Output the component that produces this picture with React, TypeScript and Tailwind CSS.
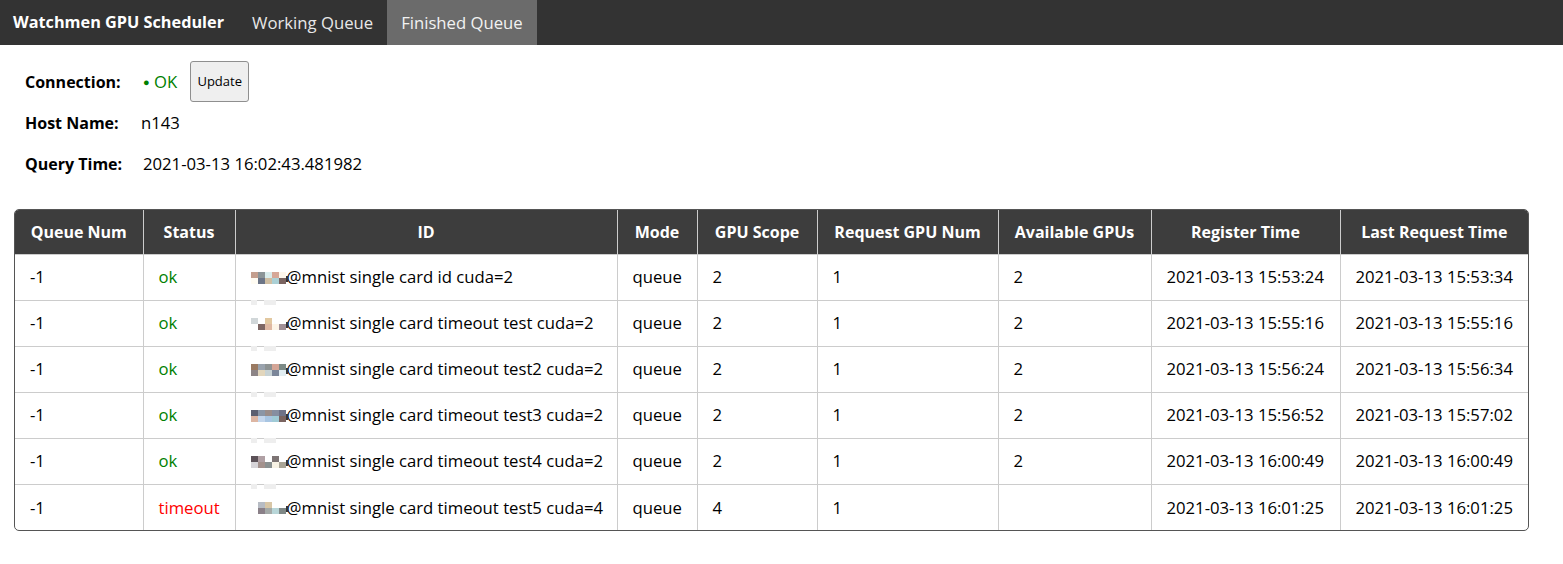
import React from "react";

type Row = {
  id: string;
  status: "ok" | "timeout";
  scope: string;
  req: string;
  avail: string;
  reg: string;
  last: string;
  mosaic: string[][];
};

const W = "#ffffff";

const rows: Row[] = [
  {
    id: "@mnist single card id cuda=2",
    status: "ok",
    scope: "2",
    req: "1",
    avail: "2",
    reg: "2021-03-13 15:53:24",
    last: "2021-03-13 15:53:34",
    mosaic: [
      ["#c49f8f", "#8b9497", "#d9ecec", "#d6a797", "#fdf6ec"],
      ["#fffcf3", "#6c7587", "#cfbea3", "#abd0d5", "#7a6460"],
    ],
  },
  {
    id: "@mnist single card timeout test cuda=2",
    status: "ok",
    scope: "2",
    req: "1",
    avail: "2",
    reg: "2021-03-13 15:55:16",
    last: "2021-03-13 15:55:16",
    mosaic: [
      ["#d1d7d9", W, "#e2c8a0", W, W],
      [W, "#7d6663", "#dfb8a2", "#fdf5e8", "#a19096"],
    ],
  },
  {
    id: "@mnist single card timeout test2 cuda=2",
    status: "ok",
    scope: "2",
    req: "1",
    avail: "2",
    reg: "2021-03-13 15:56:24",
    last: "2021-03-13 15:56:34",
    mosaic: [
      ["#9a7a62", "#9aa3ae", "#8e9393", "#d4a596", "#7c8a86"],
      ["#8c8486", "#e2d6bc", "#c7d2d4", "#7b8699", "#e1edf2"],
    ],
  },
  {
    id: "@mnist single card timeout test3 cuda=2",
    status: "ok",
    scope: "2",
    req: "1",
    avail: "2",
    reg: "2021-03-13 15:56:52",
    last: "2021-03-13 15:57:02",
    mosaic: [
      ["#5c5f70", "#8b96a6", "#9a8d8a", "#868ea0", "#6f7287"],
      ["#ddb6a3", "#c4d6ec", "#a8c5e2", "#a0cbd6", "#7a6460"],
    ],
  },
  {
    id: "@mnist single card timeout test4 cuda=2",
    status: "ok",
    scope: "2",
    req: "1",
    avail: "2",
    reg: "2021-03-13 16:00:49",
    last: "2021-03-13 16:00:49",
    mosaic: [
      ["#5c5258", "#b0a0a4", W, "#7d7474", W],
      ["#d6d4d8", "#a3918c", "#8a9090", "#f7f2e4", "#a8a496"],
    ],
  },
  {
    id: "@mnist single card timeout test5 cuda=4",
    status: "timeout",
    scope: "4",
    req: "1",
    avail: "",
    reg: "2021-03-13 16:01:25",
    last: "2021-03-13 16:01:25",
    mosaic: [
      [W, "#b7bcc4", "#d8c6a6", W, W],
      [W, "#8a8088", "#a4aaa8", "#b8d6d8", "#7f8886"],
    ],
  },
];

const headers = [
  "Queue Num",
  "Status",
  "ID",
  "Mode",
  "GPU Scope",
  "Request GPU Num",
  "Available GPUs",
  "Register Time",
  "Last Request Time",
];

const widths = [128, 92, 382, 80, 120, 181, 153, 189, 188];

function Mosaic({ colors, last }: { colors: string[][]; last: boolean }) {
  return (
    <span className="relative inline-block align-middle mr-[1px]">
      <span className="grid grid-cols-[repeat(5,7px)] grid-rows-[6px_6px] -mt-[2px]">
        {colors.flat().map((c, i) => (
          <span key={i} style={{ background: c }} />
        ))}
      </span>
      <span className="absolute right-[-2px] bottom-[2px] w-[2px] h-[6px] bg-[#333]" />
      {!last && (
        <span className="absolute left-0 top-[26px] flex gap-[7px]">
          <span className="h-[5px] w-[6px] bg-[#eeeeee]" />
          <span className="h-[5px] w-[12px] bg-[#eeeeee]" />
        </span>
      )}
    </span>
  );
}

export default function App() {
  return (
    <div className="min-h-[564px] bg-white text-black font-['Open_Sans',Arial,sans-serif] text-[16.7px]">
      <nav className="flex h-[45px] items-stretch bg-[#333333] text-white">
        <div className="flex items-center pl-[13px] pr-[14px] text-[16.25px] font-bold">Watchmen GPU Scheduler</div>
        <div className="flex items-center px-[14px] text-[#e8e8e8]">Working Queue</div>
        <div className="flex items-center px-[14px] bg-[#6b6b6b] text-[#f2f2f2]">Finished Queue</div>
      </nav>

      <div className="pt-4 pl-[25px]">
        <div className="flex h-[41px] items-center">
          <span className="inline-block w-[118px] text-[16px] font-bold">Connection:</span>
          <span className="text-[#008000]">
            <span className="text-[11px] align-[2px]">●</span> OK
          </span>
          <button className="ml-[13px] h-[41px] w-[59px] rounded-[3px] border border-[#8f8f8f] bg-[#efefef] text-[13px] text-black">
            Update
          </button>
        </div>
        <div className="flex h-[41px] items-center">
          <span className="inline-block w-[116px] text-[16px] font-bold">Host Name:</span>
          <span>n143</span>
        </div>
        <div className="flex h-[41px] items-center">
          <span className="inline-block w-[118px] text-[16px] font-bold">Query Time:</span>
          <span>2021-03-13 16:02:43.481982</span>
        </div>
      </div>

      <div className="mt-[25px] ml-[14px] w-[1515px] overflow-hidden rounded-[5px] border border-[#555]">
        <table className="w-full table-fixed border-collapse">
          <colgroup>
            {widths.map((w, i) => (
              <col key={i} style={{ width: w }} />
            ))}
          </colgroup>
          <thead>
            <tr className="h-[44px] bg-[#3d3d3d] text-[16px] text-white">
              {headers.map((h, i) => (
                <th key={h} className={`font-bold text-center ${i > 0 ? "border-l border-[#cccccc]" : ""}`}>
                  {h}
                </th>
              ))}
            </tr>
          </thead>
          <tbody>
            {rows.map((r, ri) => {
              const cells: React.ReactNode[] = [
                "-1",
                <span className={r.status === "ok" ? "text-[#008000]" : "text-[#ff0000]"}>{r.status}</span>,
                <span className="whitespace-nowrap">
                  <Mosaic colors={r.mosaic} last={ri === rows.length - 1} />
                  {r.id}
                </span>,
                "queue",
                r.scope,
                r.req,
                r.avail,
                r.reg,
                r.last,
              ];
              return (
                <tr key={ri} className="h-[46px] border-t border-[#cccccc]">
                  {cells.map((c, ci) => (
                    <td
                      key={ci}
                      className={`pl-[15px] pr-1 text-left whitespace-nowrap ${ci > 0 ? "border-l border-[#cccccc]" : ""}`}
                    >
                      {c}
                    </td>
                  ))}
                </tr>
              );
            })}
          </tbody>
        </table>
      </div>
    </div>
  );
}
